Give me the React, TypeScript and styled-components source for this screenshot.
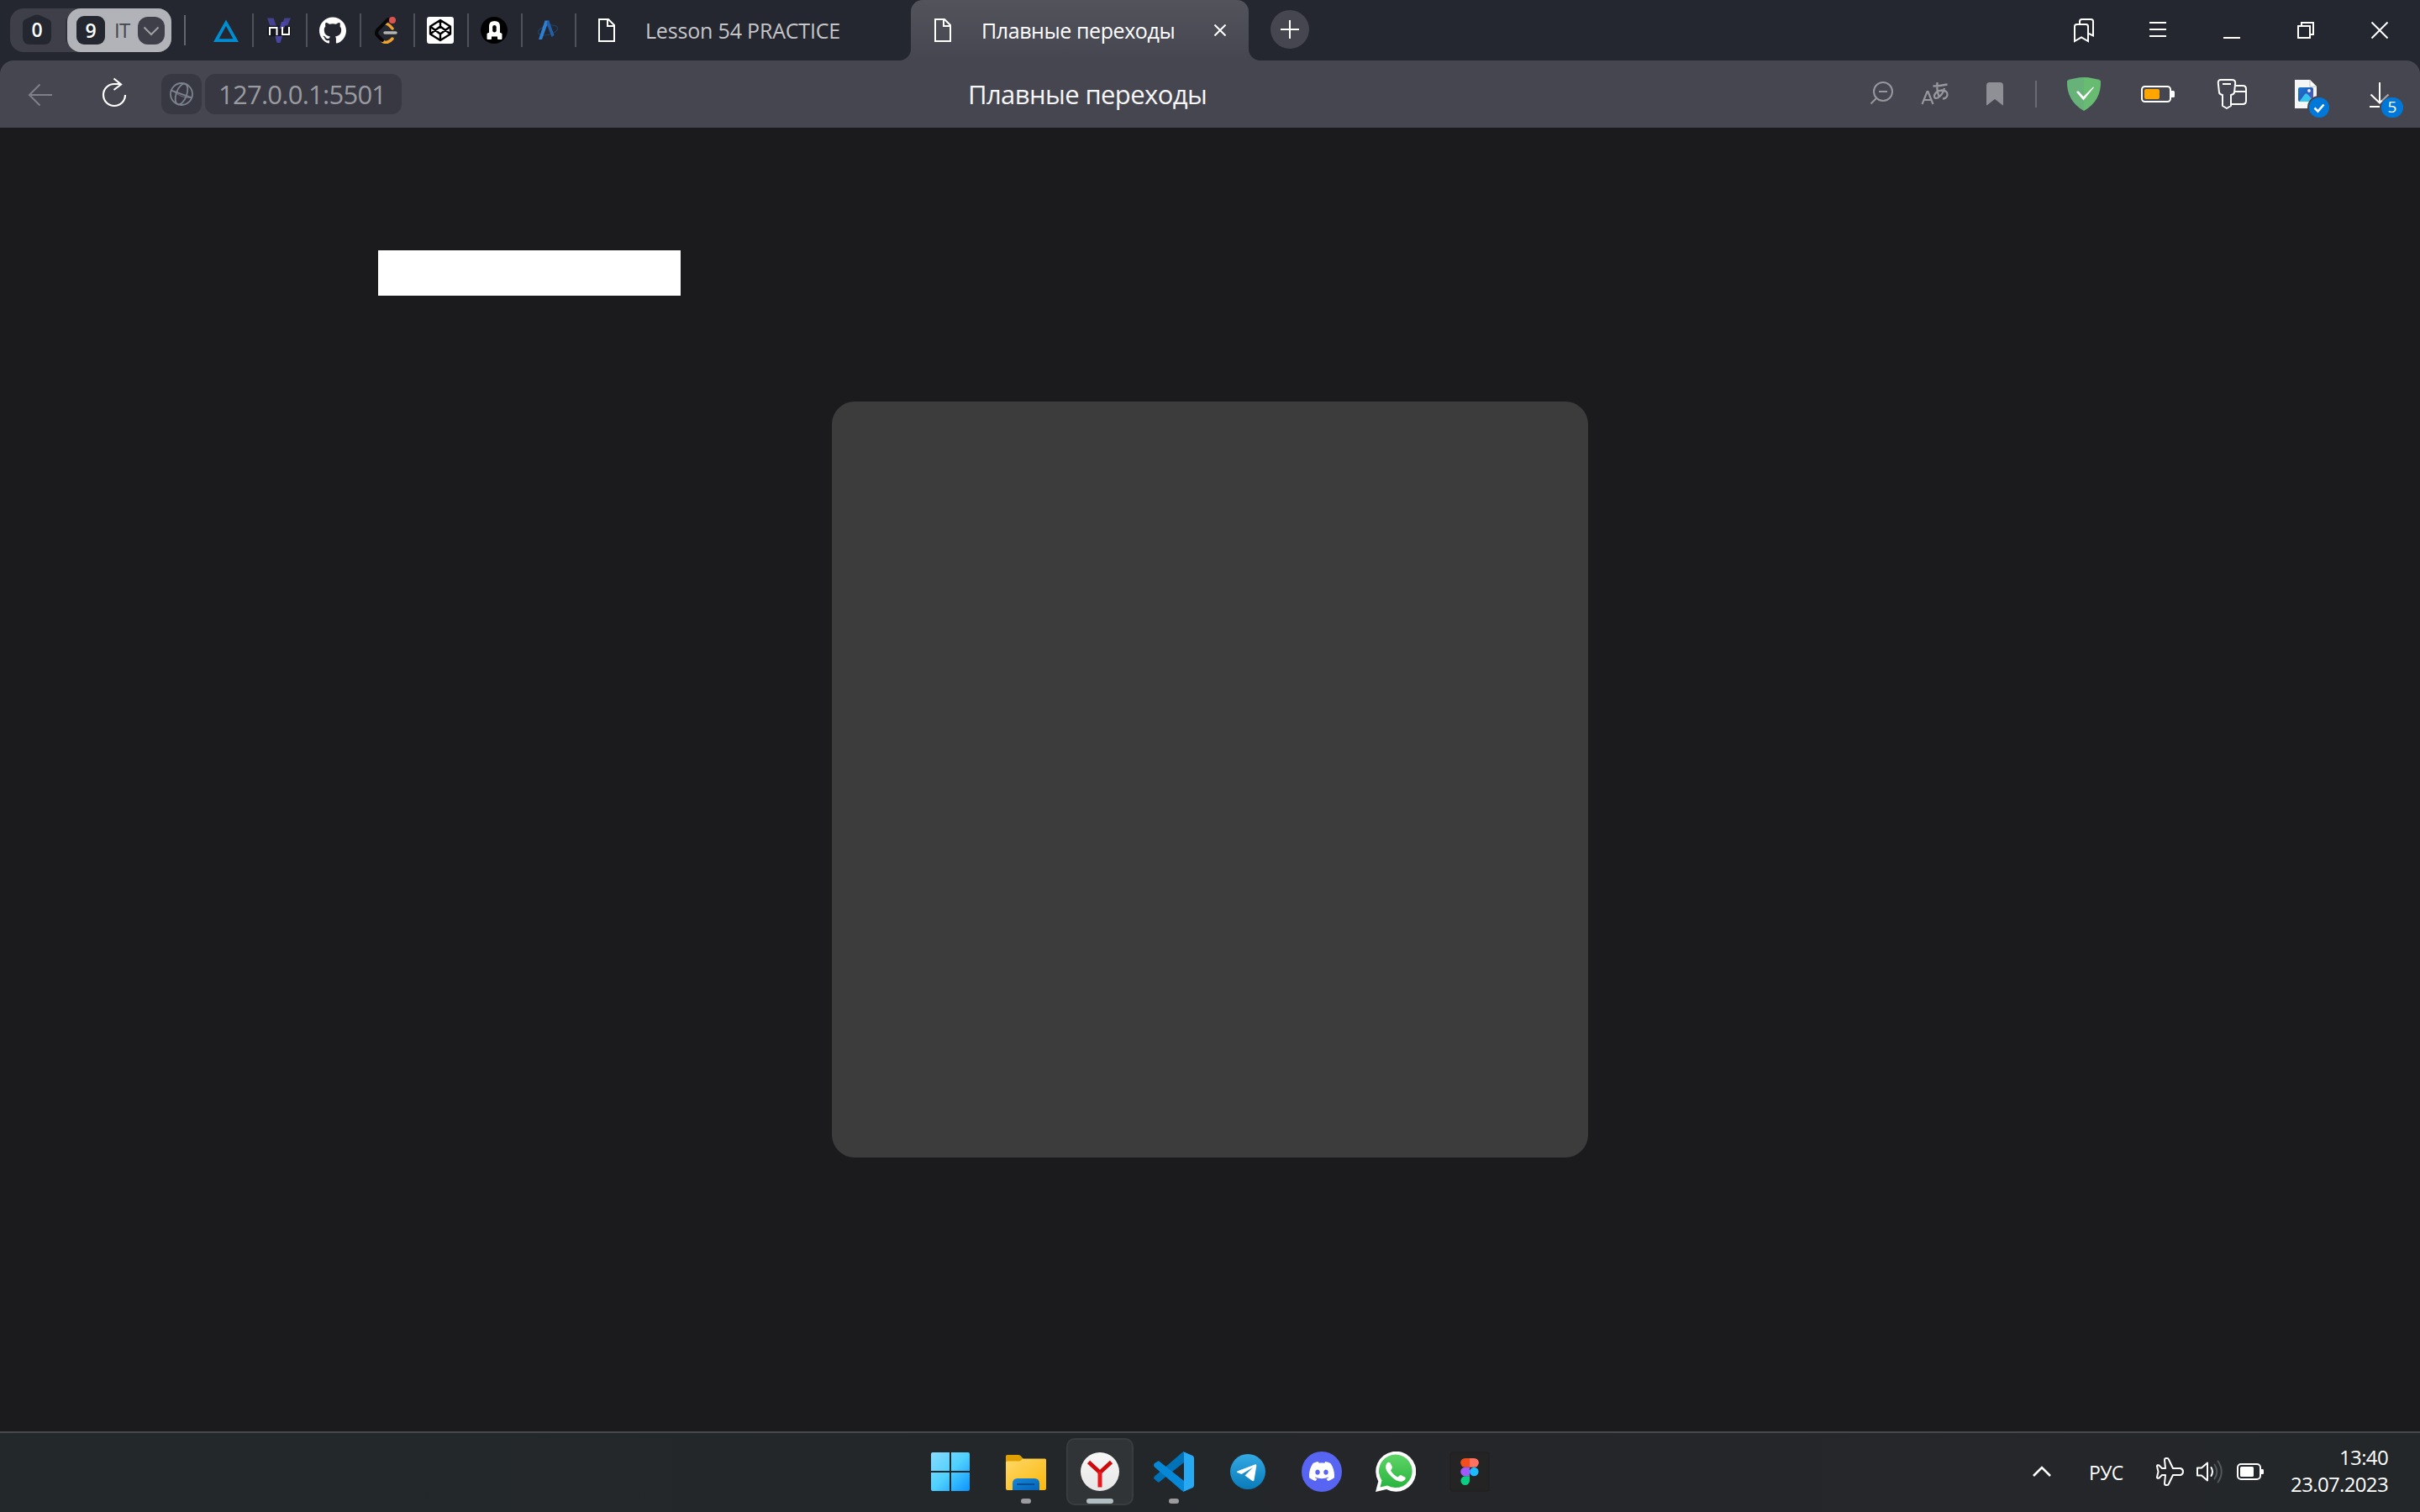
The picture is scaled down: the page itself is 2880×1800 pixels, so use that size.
import React from "react";
import styled, { createGlobalStyle } from "styled-components";
import { SiGithub, SiDiscord } from "react-icons/si";

const GlobalStyle = createGlobalStyle`
  * { box-sizing: border-box; }
  html, body { margin: 0; padding: 0; background: #1b1b1d; }
  body { font-family: "Open Sans", "Noto Sans", "Noto Sans CJK JP", sans-serif; }
  svg { display: block; flex: none; }
`;

const Screen = styled.div`
  width: 2880px;
  height: 1800px;
  display: flex;
  flex-direction: column;
  overflow: hidden;
  background: #242730;
`;

/* ---------- tab strip ---------- */

const TabStrip = styled.header`
  height: 72px;
  flex: none;
  display: flex;
  align-items: flex-start;
  padding: 0 4px 0 12px;
  background: #242730;
`;

const TabGroups = styled.div`
  width: 192px;
  height: 52px;
  margin-top: 10px;
  display: flex;
  align-items: center;
  border-radius: 16px;
  background: #3f3f49;
`;

const HomeGroup = styled.div`
  width: 68px;
  height: 52px;
  padding-left: 14px;
  display: flex;
  align-items: center;
  border-radius: 16px 0 0 16px;
  background: linear-gradient(#31323b, #31323b) 66px 12px / 2px 28px no-repeat;
`;

const HomeShape = styled.div`
  width: 36px;
  height: 38px;
  margin-top: -2px;
  display: grid;
  place-items: center;
  > * { grid-area: 1 / 1; }
`;

const Count = styled.span`
  color: #fff;
  font-size: 23px;
  line-height: 34px;
  font-weight: 600;
`;

const OpenGroup = styled.div`
  width: 124px;
  height: 52px;
  padding: 0 8px 0 11px;
  display: flex;
  align-items: center;
  border-radius: 16px;
  background: #b2b3b8;
`;

const CountBadge = styled.div`
  width: 34px;
  height: 34px;
  display: flex;
  align-items: center;
  justify-content: center;
  border-radius: 9px;
  background: #242730;
`;

const GroupName = styled.span`
  flex: 1;
  padding-left: 11px;
  color: #45464d;
  font-size: 24px;
  line-height: 34px;
  letter-spacing: -0.6px;
`;

const GroupToggle = styled.div`
  width: 32px;
  height: 33px;
  display: flex;
  align-items: center;
  justify-content: center;
  border-radius: 12px;
  background: #3f3f49;
`;

const Divider = styled.div<{ $h: number; $m: string; $c?: string }>`
  width: 2px;
  height: ${(p) => p.$h}px;
  margin: ${(p) => p.$m};
  flex: none;
  background: ${(p) => p.$c ?? "#65666d"};
`;

const PinnedTab = styled.div`
  width: 64px;
  height: 40px;
  margin-top: 16px;
  padding-right: 2px;
  border-right: 2px solid #515259;
  display: flex;
  align-items: center;
  justify-content: center;
`;

const Tab = styled.div<{ $w: number; $pad: number; $active?: boolean }>`
  position: relative;
  width: ${(p) => p.$w}px;
  height: 72px;
  padding: 0 27px 0 ${(p) => p.$pad}px;
  display: flex;
  align-items: center;
  border-radius: 14px 14px 0 0;
  background: ${(p) => (p.$active ? "linear-gradient(#53535c, #464650)" : "none")};
  &::before, &::after {
    content: "";
    display: ${(p) => (p.$active ? "block" : "none")};
    position: absolute;
    bottom: 0;
    width: 14px;
    height: 14px;
  }
  &::before { right: 100%; background: radial-gradient(circle at 0 0, transparent 13.5px, #464650 14.5px); }
  &::after { left: 100%; background: radial-gradient(circle at 100% 0, transparent 13.5px, #464650 14.5px); }
`;

const TabLabel = styled.span<{ $c: string; $ls: number }>`
  flex: 1;
  padding: 0 0 0 36px;
  color: ${(p) => p.$c};
  font-size: 25px;
  line-height: 36px;
  letter-spacing: ${(p) => p.$ls}px;
  white-space: nowrap;
`;

const NewTab = styled.div`
  width: 46px;
  height: 46px;
  margin: 12px 0 0 26px;
  border-radius: 50%;
  background: #464650;
`;

const Spacer = styled.div`
  flex: 1;
`;

const Slot = styled.div<{ $w: number; $h: number }>`
  width: ${(p) => p.$w}px;
  height: ${(p) => p.$h}px;
  flex: none;
  display: flex;
  align-items: center;
  justify-content: center;
`;

/* ---------- toolbar ---------- */

const Toolbar = styled.div`
  height: 80px;
  flex: none;
  display: flex;
  align-items: center;
  padding: 0 4px;
  border-radius: 16px 16px 0 0;
  background: #464650;
`;

const SiteButton = styled.div`
  width: 48px;
  height: 48px;
  margin-left: 12px;
  border-radius: 12px;
  background: #373842;
`;

const Address = styled.div`
  width: 234px;
  height: 48px;
  margin-left: 4px;
  padding-left: 16px;
  border-radius: 12px;
  background: #373842;
  color: #9a9ba0;
  font-size: 31px;
  line-height: 48px;
  letter-spacing: -0.75px;
  white-space: nowrap;
`;

const PageTitle = styled.h1`
  flex: 1;
  margin: 0;
  padding-left: 674px;
  color: #f6f6f7;
  font-size: 31px;
  line-height: 48px;
  font-weight: 400;
  letter-spacing: -0.6px;
  white-space: nowrap;
`;

/* ---------- page ---------- */

const Page = styled.main`
  height: 1552px;
  flex: none;
  display: flex;
  flex-direction: column;
  padding-top: 146px;
  background: #1b1b1d;
`;

const WhiteBar = styled.div`
  width: 360px;
  height: 54px;
  margin-left: 450px;
  background: #fff;
`;

const Card = styled.div`
  width: 900px;
  height: 900px;
  margin: 126px auto 0;
  border-radius: 27px;
  background: #3c3c3d;
`;

/* ---------- taskbar ---------- */

const Taskbar = styled.footer`
  height: 96px;
  flex: none;
  display: flex;
  border-top: 2px solid #48494b;
  padding-left: 1089px;
  background: linear-gradient(90deg, #23282b 0%, #23272a 45%, #25262a 60%, #242729 100%);
`;

const AppCell = styled.div`
  width: 88px;
  height: 94px;
  padding: 6px 4px 8px;
  flex: none;
`;

const AppTile = styled.div<{ $active?: boolean }>`
  position: relative;
  width: 80px;
  height: 80px;
  display: flex;
  align-items: center;
  justify-content: center;
  border-radius: 10px;
  border: 2px solid ${(p) => (p.$active ? "#3a3d40" : "transparent")};
  background: ${(p) => (p.$active ? "#303437" : "none")};
`;

const Indicator = styled.div<{ $w: number }>`
  position: absolute;
  left: 50%;
  bottom: 0;
  width: ${(p) => p.$w}px;
  height: 6px;
  transform: translateX(-50%);
  border-radius: 3px;
  background: ${(p) => (p.$w > 12 ? "#b0bec2" : "#9c9c9e")};
`;

const Tray = styled.div`
  flex: 1;
  height: 92px;
  display: flex;
  align-items: center;
  justify-content: flex-end;
  padding-right: 38px;
  color: #fff;
`;

const Language = styled.span`
  width: 79px;
  font-size: 23px;
  line-height: 32px;
  padding-top: 2px;
  letter-spacing: -0.7px;
`;

const Clock = styled.div`
  width: 147px;
  text-align: right;
  font-size: 24px;
  line-height: 32px;
  padding-bottom: 2px;
  letter-spacing: -0.65px;
  white-space: nowrap;
`;

/* ---------- drawings ---------- */

const Line = ({ d, c = "#fff", w = 2, size = 48 }: { d: string; c?: string; w?: number; size?: number }) => (
  <svg width={size} height={size} viewBox={`0 0 ${size} ${size}`} fill="none" stroke={c} strokeWidth={w}>
    <path d={d} />
  </svg>
);

const DocIcon = () => (
  <svg width="20" height="28" viewBox="0 0 20 28" fill="none" stroke="#fff" strokeWidth="2">
    <path d="M1 1H12L19 8V27H1ZM11 1V9H19" />
  </svg>
);

const NuIcon = () => (
  <svg width="32" height="32" viewBox="0 0 32 32" fill="none">
    <path d="M2 1.500H9.500L13 11H5.500Z" fill="#45418f" />
    <path d="M22.500 1.500H30L26 11H19Z" fill="#45418f" />
    <rect x="2" y="10.500" width="28" height="13" rx="4" fill="#14151b" opacity="0.85" />
    <path d="M19 6H25L22 14H16.500Z" fill="#4a46a6" />
    <path d="M11.500 23H20L17.500 31H13.500Z" fill="#4a46a6" />
    <path d="M5 22V13H13.500V22M20 12V21H28V12" stroke="#fff" strokeWidth="2" />
  </svg>
);

const LeetIcon = () => (
  <svg width="32" height="32" viewBox="0 0 32 32" fill="none" strokeLinecap="round">
    <path d="M15 8Q18 8 23 14M11 29Q17 33 23 26" stroke="#f0a22e" strokeWidth="3.500" />
    <path d="M18 3L5 16Q3 20 5 22L11 28" stroke="#070707" strokeWidth="4" />
    <path d="M14 19H27" stroke="#b3b3b3" strokeWidth="3.500" />
    <circle cx="23" cy="4" r="4" fill="#d9534f" />
  </svg>
);

const CodepenIcon = () => (
  <svg width="32" height="32" viewBox="0 0 32 32" fill="none">
    <rect width="32" height="32" rx="3" fill="#fff" />
    <path
      d="M16 4L28 11.500V20.500L16 28L4 20.500V11.500ZM16 4V11.500M16 20.500V28M4 11.500L16 20.500L28 11.500M4 20.500L16 11.500L28 20.500"
      stroke="#000"
      strokeWidth="2.400"
      strokeLinejoin="round"
    />
  </svg>
);

const RocketIcon = () => (
  <svg width="32" height="32" viewBox="0 0 32 32" fill="none">
    <circle cx="16" cy="16" r="16" fill="#000" />
    <path d="M8.500 26V20.500L11 19V11Q11 6 16.500 6Q22 6 22 11V19L24.500 20.500V26H21V22.500H12V26Z" fill="#fff" stroke="#fff" strokeWidth="2" strokeLinejoin="round" />
    <rect x="14.200" y="10" width="4.500" height="8.500" rx="2.200" fill="#000" />
  </svg>
);

const ApolloIcon = () => (
  <svg width="32" height="32" viewBox="0 0 32 32" fill="none">
    <ellipse cx="16" cy="16" rx="12" ry="5.500" transform="rotate(-14 16 16)" stroke="#1d456f" strokeWidth="1" />
    <path d="M5 27L12.500 4.500H17L9 27Z" fill="#2e7fd0" />
    <path d="M14.500 8L16 4.500H17.500L23.500 22L20.500 24Z" fill="#235fa9" />
  </svg>
);

const GlobeIcon = () => (
  <svg width="48" height="48" viewBox="0 0 48 48" fill="none" stroke="#7d838e" strokeWidth="1.800">
    <circle cx="24" cy="24" r="13" />
    <g transform="rotate(20 24 24)">
      <ellipse cx="24" cy="24" rx="6.200" ry="13" />
      <path d="M11 24H37" />
    </g>
    <path d="M12.500 19.500Q24 29 35.500 28.500" strokeWidth="0.800" />
  </svg>
);

const TranslateIcon = () => (
  <svg width="48" height="48" viewBox="0 0 48 48" fill="none" stroke="#97989d" strokeWidth="2">
    <path d="M7.500 36L13.500 21H14.500L20.500 36M10 31H18" strokeWidth="2.200" />
    <path d="M20.500 14.500Q28 14.500 37.500 12.500M25.500 10Q24.500 20 28 28M34 17Q32 25 26 28.500Q21.500 30 22 25.500Q24 20 31 19.500Q38 20 37.500 25Q37 29 32 29.500" strokeWidth="2.300" />
  </svg>
);

const ShieldIcon = () => (
  <svg width="48" height="48" viewBox="0 0 48 48">
    <path d="M24 4Q13 4.300 4 8Q3 32 24 44Z" fill="#67b279" />
    <path d="M24 4Q35 4.300 44 8Q45 32 24 44Z" fill="#68bc71" />
    <path d="M15 21.500Q17 19.500 19 22L23.500 27L35 15.500L36 16L23.500 31.500Z" fill="#fff" />
  </svg>
);

const EnergyIcon = () => (
  <svg width="48" height="48" viewBox="0 0 48 48">
    <rect x="5" y="15" width="34" height="18" rx="3.500" fill="none" stroke="#fff" strokeWidth="2" />
    <path d="M40 20H42.500Q44 20 44 21.500V26.500Q44 28 42.500 28H40Z" fill="#fff" />
    <rect x="8" y="18" width="18" height="12" rx="2" fill="#ffa500" />
  </svg>
);

const KeyIcon = () => (
  <svg width="48" height="48" viewBox="0 0 48 48" fill="none" stroke="#fff" strokeWidth="2" strokeLinejoin="round">
    <path d="M11 7H24Q28.500 7 28.200 11L27 22Q26.500 24.500 23 25V38L18 41L13 38V25Q9.500 24.500 9 22L7.800 11Q7.500 7 11 7ZM13 12H23" />
    <path d="M28.500 14H37Q41 14 41 18V32Q41 36 37 36H23.500M27.500 21H41" />
  </svg>
);

const ImageFileIcon = () => (
  <svg width="48" height="48" viewBox="0 0 48 48">
    <defs>
      <linearGradient id="pic" x1="0" y1="0" x2="1" y2="1">
        <stop offset="0" stopColor="#1877d8" />
        <stop offset="0.5" stopColor="#2560b8" />
        <stop offset="1" stopColor="#7d57c9" />
      </linearGradient>
    </defs>
    <path d="M11 7H29L37 15V41H11Z" fill="#f6f6f6" />
    <path d="M29 7L37 15H29Z" fill="#fff" stroke="#b9b9bb" strokeWidth="0.800" />
    <rect x="15" y="16" width="18" height="17" rx="2" fill="url(#pic)" />
    <path d="M17 32L23 24Q24.500 22.500 26 24L32.500 31L32 33H17Z" fill="#35c5f0" />
    <circle cx="28" cy="20" r="1.900" fill="#e8edff" />
    <circle cx="40" cy="40" r="14" fill="#464650" />
    <circle cx="40" cy="40" r="12" fill="#0078d9" />
    <path d="M34.500 40.500L38.500 44.500L45.500 36.500" fill="none" stroke="#fff" strokeWidth="2.600" />
  </svg>
);

const DownloadWrap = styled.div`
  position: relative;
  width: 48px;
  height: 48px;
`;

const DownloadBadge = styled.span`
  position: absolute;
  left: 26px;
  top: 28px;
  width: 26px;
  height: 24px;
  border-radius: 12px;
  background: #0078d9;
  color: #fff;
  font-size: 19px;
  line-height: 23px;
  text-align: center;
`;

const OverflowSlot = styled(Slot)`
  svg { overflow: visible; }
`;

const WindowsIcon = () => (
  <svg width="50" height="46" viewBox="0 0 50 46">
    <defs>
      <linearGradient id="win" gradientUnits="userSpaceOnUse" x1="0" y1="0" x2="46" y2="46">
        <stop offset="0" stopColor="#8adcff" />
        <stop offset="0.5" stopColor="#4fd0fd" />
        <stop offset="1" stopColor="#0a94ff" />
      </linearGradient>
    </defs>
    <path d="M2 0H22V22H0V2Q0 0 2 0ZM24 0H44Q46 0 46 2V22H24ZM0 24H22V46H2Q0 46 0 44ZM24 24H46V44Q46 46 44 46H24Z" fill="url(#win)" />
  </svg>
);

const FolderIcon = () => (
  <svg width="48" height="48" viewBox="0 0 48 48">
    <defs>
      <linearGradient id="fold" x1="0" y1="0" x2="1" y2="1">
        <stop offset="0" stopColor="#ffd869" />
        <stop offset="1" stopColor="#fab70a" />
      </linearGradient>
      <linearGradient id="pocket" x1="0" y1="0" x2="1" y2="1">
        <stop offset="0" stopColor="#1687d8" />
        <stop offset="1" stopColor="#0463b8" />
      </linearGradient>
    </defs>
    <path d="M0 5.500Q0 4 1.500 4H15Q17 4 18.500 6L21 9V14H0Z" fill="#dfa000" />
    <path d="M0 13Q0 11.500 2 11.500H16Q18 11.500 20 8.500H46.500Q48 8.500 48 10V44Q48 46 46 46H2Q0 46 0 44Z" fill="url(#fold)" />
    <path d="M8 46V38Q8 32 14 32H34Q40 32 40 38V46Z" fill="url(#pocket)" />
    <path d="M14 39H33.500" stroke="#0a4d90" strokeWidth="2" strokeLinecap="round" />
  </svg>
);

const YandexIcon = () => (
  <svg width="48" height="48" viewBox="0 0 48 48">
    <defs>
      <linearGradient id="ya" x1="0" y1="0" x2="0" y2="1">
        <stop offset="0" stopColor="#f7f7f7" />
        <stop offset="1" stopColor="#e6e6e6" />
      </linearGradient>
    </defs>
    <circle cx="24" cy="24" r="23" fill="url(#ya)" />
    <path d="M10.500 12.500L24 25L37.500 12.500" fill="none" stroke="#cf0a0c" strokeWidth="4.800" />
    <path d="M24 24V42.500" stroke="#e5191c" strokeWidth="5" />
  </svg>
);

const CodeIcon = () => (
  <svg width="48" height="48" viewBox="0 0 48 48">
    <path d="M0 32L5 36.500Q6 37 7 36L36 13V0.500Q35 0 33.500 1.500L1 29.500Q0 31 0 32Z" fill="#0072b8" />
    <path d="M0 16Q0 15 1 14L5 11.500Q6 11 7 12L36 35V47.500Q35 48 33.500 46.500L1 18.500Q0 17 0 16Z" fill="#0788d6" />
    <path d="M35 0L46.500 5Q48 6 48 8V40Q48 42 46.500 43L35 48Q36 47 36 45V3Q36 1 35 0Z" fill="#27a9f3" />
  </svg>
);

const TelegramIcon = () => (
  <svg width="48" height="48" viewBox="0 0 48 48">
    <defs>
      <linearGradient id="tg" x1="0" y1="0" x2="0" y2="1">
        <stop offset="0" stopColor="#34a9e4" />
        <stop offset="1" stopColor="#087bb8" />
      </linearGradient>
    </defs>
    <circle cx="24" cy="24" r="21" fill="url(#tg)" />
    <path d="M11 24.800Q10.500 24 12 23.300L33 15.300Q34.500 15 34.300 17L31.500 34Q31 36 29 34.800L20.500 28.500L30 19L16.500 27Z" fill="#fff" />
  </svg>
);

const DiscordIcon = () => (
  <svg width="48" height="48" viewBox="0 0 48 48">
    <circle cx="24" cy="24" r="24" fill="#5865f2" />
    <SiDiscord x="9" y="8.500" width="30" height="30" size={30} color="#fff" />
  </svg>
);

const WhatsappIcon = () => (
  <svg width="48" height="48" viewBox="0 0 48 48">
    <defs>
      <linearGradient id="wa" x1="0" y1="0" x2="0" y2="1">
        <stop offset="0" stopColor="#5fd467" />
        <stop offset="1" stopColor="#29b440" />
      </linearGradient>
    </defs>
    <path d="M0 48L3.300 35.500A24 24 0 1 1 13 45Z" fill="#fff" />
    <path d="M5.500 42.500L7.500 34.500A19.800 19.800 0 1 1 14 40.500Z" fill="url(#wa)" />
    <path d="M14.500 13Q16 12.200 17.500 13.500L20 18.500Q20 20 18 22.500Q21 28 26.500 30.500Q29 27.500 30 28L35.500 30.800Q36.500 34 32 35.500Q26 37 18.500 29.500Q11 22 12.200 17Q13 14 14.500 13Z" fill="#fff" />
  </svg>
);

const FigmaIcon = () => (
  <svg width="48" height="48" viewBox="0 0 48 48">
    <rect x="1" y="1" width="46" height="46" rx="2" fill="#242424" stroke="#1f1f20" strokeWidth="1" />
    <path d="M24 8H18.500A5.300 5.300 0 0 0 18.500 18.700H24Z" fill="#f24e1e" />
    <path d="M24 8H29.500A5.300 5.300 0 0 1 29.500 18.700H24Z" fill="#ff7262" />
    <path d="M24 18.700H18.500A5.300 5.300 0 0 0 18.500 29.300H24Z" fill="#a259ff" />
    <circle cx="29.300" cy="24" r="5.300" fill="#1abcfe" />
    <path d="M24 29.300H18.500A5.300 5.300 0 1 0 24 34.700Z" fill="#0acf83" />
  </svg>
);

const PlaneIcon = () => (
  <svg width="34" height="34" viewBox="0 0 34 34" fill="none" stroke="#fff" strokeWidth="2" strokeLinejoin="round">
    <path d="M12 13H8L4.500 9.500Q2 8.500 2 10.500L3.500 17L2 23.500Q2 25.500 4.500 24.500L8 21H12L11 31Q11 33 13 33H14Q15.500 33 16 31.500L21 21H30Q33 20 33 17Q33 14 30 13H21L16 2.500Q15.500 1 14 1H13Q11 1 11 3Z" />
  </svg>
);

const SpeakerIcon = () => (
  <svg width="34" height="34" viewBox="0 0 34 34" fill="none" strokeWidth="2" strokeLinejoin="round" strokeLinecap="round">
    <path d="M2 12.500H7L14 6.500V27.500L7 21.500H2Z" stroke="#fff" />
    <path d="M18.500 12Q21.500 17 18.500 22" stroke="#fff" />
    <path d="M22.500 8.500Q28 17 22.500 25.500M26.500 4.500Q35 17 26.500 29.500" stroke="#55585a" />
  </svg>
);

const BatteryIcon = () => (
  <svg width="34" height="34" viewBox="0 0 34 34">
    <rect x="2" y="8" width="27" height="18" rx="4" fill="none" stroke="#fff" strokeWidth="2" />
    <rect x="5" y="11" width="16" height="12" rx="1.500" fill="#fff" />
    <path d="M30 14H32Q33 14 33 15.500V18.500Q33 20 32 20H30Z" fill="#fff" />
  </svg>
);

const TrayIcons = styled.div`
  display: flex;
  gap: 14px;
`;

const TriangleIcon = () => (
  <svg width="32" height="32" viewBox="0 0 32 32">
    <path d="M17 3.500L32 30H2ZM17 11L8.500 26.300H25.500Z" fill="#008dd2" fillRule="evenodd" />
  </svg>
);

const pinned = [
  <TriangleIcon />,
  <NuIcon />,
  <SiGithub size={32} color="#fff" />,
  <LeetIcon />,
  <CodepenIcon />,
  <RocketIcon />,
  <ApolloIcon />,
];

const apps: { icon: React.ReactNode; bar?: number }[] = [
  { icon: <WindowsIcon /> },
  { icon: <FolderIcon />, bar: 12 },
  { icon: <YandexIcon />, bar: 32 },
  { icon: <CodeIcon />, bar: 12 },
  { icon: <TelegramIcon /> },
  { icon: <DiscordIcon /> },
  { icon: <WhatsappIcon /> },
  { icon: <FigmaIcon /> },
];

const windowButtons = [
  "M13 37V19.500Q13 17 15.500 17H26.500Q29 17 29 19.500V37L21 32.500ZM19 16V13.500Q19 11 21.500 11H32.500Q35 11 35 13.500V30.500L30 28",
  "M14 15H34M14 23H34M14 31H34",
  "M14 33H34",
  "M15 19H29V33H15ZM19 19V15H33V29H29",
  "M14.500 14.500L33.500 33.500M33.500 14.500L14.500 33.500",
];

export default function App() {
  return (
    <Screen>
      <GlobalStyle />
      <TabStrip>
        <TabGroups>
          <HomeGroup>
            <HomeShape>
              <svg width="36" height="38" viewBox="0 0 36 38">
                <path d="M1 12Q1 8 5 6.500L14 2.500Q18 0.500 22 2.500L31 6.500Q35 8 35 12V28Q35 37 26 37H10Q1 37 1 28Z" fill="#242730" />
              </svg>
              <Count>0</Count>
            </HomeShape>
          </HomeGroup>
          <OpenGroup>
            <CountBadge>
              <Count>9</Count>
            </CountBadge>
            <GroupName>IT</GroupName>
            <GroupToggle>
              <Line size={32} c="#9fa0a6" d="M7.500 12.500L16 21L24.500 12.500" />
            </GroupToggle>
          </OpenGroup>
        </TabGroups>
        <Divider $h={36} $m="18px 17px 0 15px" />
        {pinned.map((icon, i) => (
          <PinnedTab key={i}>{icon}</PinnedTab>
        ))}
        <Tab $w={398} $pad={26}>
          <DocIcon />
          <TabLabel $c="#c6c6c8" $ls={-0.18}>Lesson 54 PRACTICE</TabLabel>
        </Tab>
        <Tab $w={402} $pad={28} $active>
          <DocIcon />
          <TabLabel $c="#fff" $ls={-0.42}>Плавные переходы</TabLabel>
          <Line size={14} d="M0.500 0.500L13.500 13.500M13.500 0.500L0.500 13.500" />
        </Tab>
        <NewTab>
          <Line size={46} d="M12 23H34M23 12V34" />
        </NewTab>
        <Spacer />
        {windowButtons.map((d, i) => (
          <Slot key={i} $w={88} $h={72}>
            <Line d={d} w={2} />
          </Slot>
        ))}
      </TabStrip>

      <Toolbar>
        <Slot $w={88} $h={80}>
          <Line c="#7f8087" d="M38 25H11M23.500 12.500L11 25L23.500 37.500" />
        </Slot>
        <Slot $w={88} $h={80}>
          <Line w={2.2} d="M37 25A13 13 0 1 1 24 12H32M23.500 5.500L32 12.500L23.500 19" />
        </Slot>
        <SiteButton>
          <GlobeIcon />
        </SiteButton>
        <Address>127.0.0.1:5501</Address>
        <PageTitle>Плавные переходы</PageTitle>
        <Slot $w={64} $h={80}>
          <Line c="#97989d" d="M36 21A11 11 0 1 1 14 21A11 11 0 1 1 36 21M17.500 28.500L10.500 35.500M20 21H30" />
        </Slot>
        <Slot $w={64} $h={80}>
          <TranslateIcon />
        </Slot>
        <Slot $w={76} $h={80}>
          <svg width="48" height="48" viewBox="0 0 48 48">
            <path d="M14 14Q14 10 18 10H30Q34 10 34 14V36.500Q34 38 33 37L24 30L15 37Q14 38 14 36.500Z" fill="#8f9096" />
          </svg>
        </Slot>
        <Divider $h={32} $m="0 12px 0 10px" $c="#696a72" />
        <Slot $w={88} $h={80}>
          <ShieldIcon />
        </Slot>
        <Slot $w={88} $h={80}>
          <EnergyIcon />
        </Slot>
        <Slot $w={88} $h={80}>
          <KeyIcon />
        </Slot>
        <OverflowSlot $w={88} $h={80}>
          <ImageFileIcon />
        </OverflowSlot>
        <Slot $w={88} $h={80}>
          <DownloadWrap>
            <svg width="48" height="48" viewBox="0 0 48 48" fill="none" stroke="#fff" strokeWidth="2">
              <path d="M24 10V34M13.500 24.500L24 34.500L27 31.500M12 39H24" />
              <path d="M27 31.500L34.500 24.500" stroke="#a9a9ae" />
            </svg>
            <DownloadBadge>5</DownloadBadge>
          </DownloadWrap>
        </Slot>
      </Toolbar>

      <Page>
        <WhiteBar />
        <Card />
      </Page>

      <Taskbar>
        {apps.map((a, i) => (
          <AppCell key={i}>
            <AppTile $active={a.bar === 32}>
              {a.icon}
              {a.bar && <Indicator $w={a.bar} />}
            </AppTile>
          </AppCell>
        ))}
        <Tray>
          <Slot $w={112} $h={92}>
            <Line size={24} w={2.6} d="M2 17L12 7L22 17" />
          </Slot>
          <Language>РУС</Language>
          <TrayIcons>
            <PlaneIcon />
            <SpeakerIcon />
            <BatteryIcon />
          </TrayIcons>
          <Clock>
            13:40
            <br />
            23.07.2023
          </Clock>
        </Tray>
      </Taskbar>
    </Screen>
  );
}
